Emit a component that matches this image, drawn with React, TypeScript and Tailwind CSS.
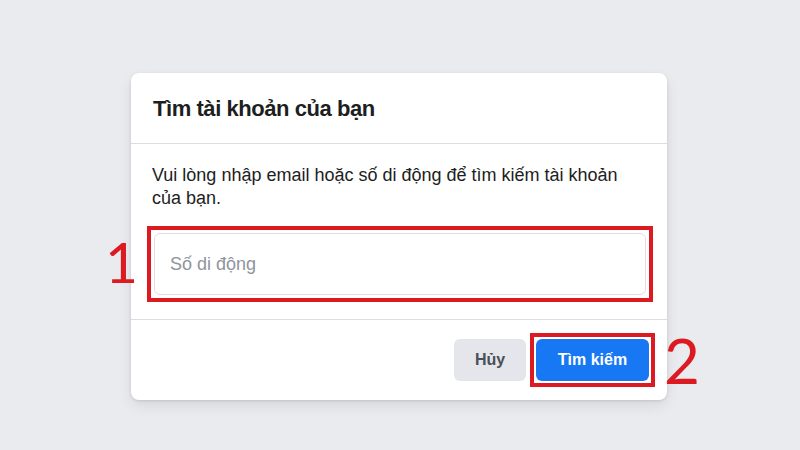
import React from 'react'

const font = { fontFamily: '"Liberation Sans", Arial, sans-serif' }
const markFont = { fontFamily: 'Lato, "DejaVu Sans", sans-serif' }

export default function App() {
  return (
    <div
      className="relative w-[800px] h-[450px] overflow-hidden bg-[#e9ebee] pt-[73px] pl-[131px]"
      style={font}
    >
      {/* dialog */}
      <div className="w-[536px] rounded-lg bg-white shadow-[0_1px_3px_rgba(0,0,0,0.12),0_6px_14px_rgba(0,0,0,0.08)]">
        <div className="h-[71px] flex items-center px-[22px] border-b border-[#dadde1]">
          <h2 className="text-[22px] font-bold tracking-[-0.02em] text-[#1c1e21]">Tìm tài khoản của bạn</h2>
        </div>

        <div className="px-[21px] pt-5 pb-[17px]">
          <p className="text-[18px] leading-[23px] text-[#1c1e21]">
            Vui lòng nhập email hoặc số di động để tìm kiếm tài khoản của bạn.
          </p>
          <div className="mt-4 -ml-[5px] w-[506px] border-4 border-[#dc1a22] p-[3px]">
            <input
              type="text"
              placeholder="Số di động"
              className="w-full h-[62px] rounded-md border border-[#dddfe2] px-[15px] text-[18px] text-[#1c1e21] placeholder-[#90949c] outline-none"
              style={font}
            />
          </div>
        </div>

        <div className="h-[81px] flex items-center justify-end gap-1 pr-3 border-t border-[#dadde1]">
          <button className="h-[42px] w-[72px] rounded-md bg-[#e4e6eb] text-[16px] font-bold text-[#4b4f56]">
            Hủy
          </button>
          <div className="border-4 border-[#dc1a22] p-[2px]">
            <button className="h-[42px] w-[113px] rounded-md bg-[#1877f2] text-[16px] font-bold text-white">
              Tìm kiếm
            </button>
          </div>
        </div>
      </div>

      {/* annotation numbers */}
      <span className="absolute left-[105px] top-[233px] text-[57px] leading-none text-[#dc1a22]" style={markFont}>
        1
      </span>
      <span className="absolute left-[664px] top-[329px] text-[62px] leading-none text-[#dc1a22]" style={markFont}>
        2
      </span>
    </div>
  )
}
